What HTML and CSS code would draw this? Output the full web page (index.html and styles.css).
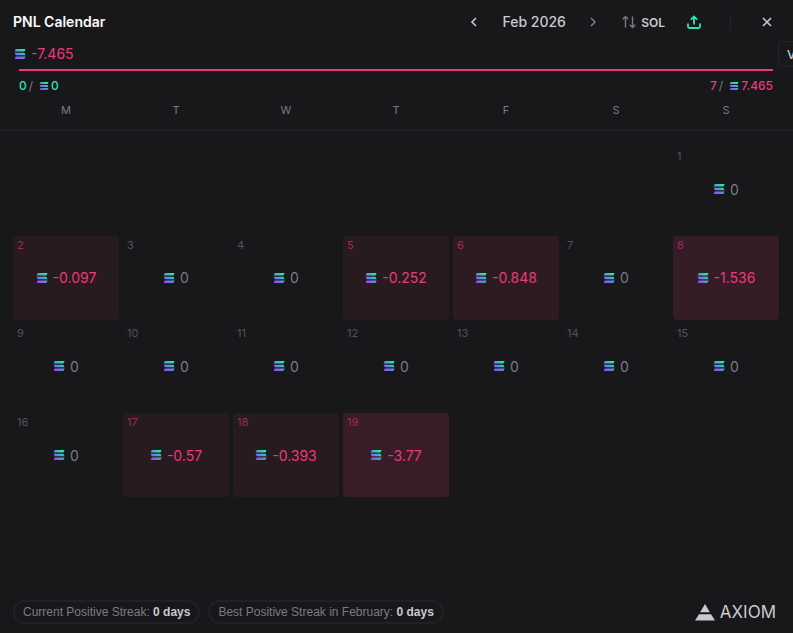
FILE: index.html
```html
<!DOCTYPE html>
<html lang="en">
<head>
	<meta charset="UTF-8">
	<meta name="viewport" content="width=device-width, initial-scale=1.0">
	<title>PNL Calendar</title>
	<link rel="stylesheet" href="styles.css">
</head>
<body>
	<svg class="defs" width="0" height="0" aria-hidden="true">
		<defs>
			<linearGradient id="solGradient" gradientUnits="userSpaceOnUse" x1="2" y1="10" x2="10" y2="0">
				<stop offset="0" stop-color="#9945ff"/>
				<stop offset="0.5" stop-color="#5497d5"/>
				<stop offset="1" stop-color="#19fb9b"/>
			</linearGradient>
			<symbol id="sol" viewBox="0 0 12 10">
				<path fill="url(#solGradient)" d="M1.8 0H11.6L10.4 2.5H0.6ZM0.6 3.8H10.4L11.6 6.3H1.8ZM1.8 7.5H11.6L10.4 10H0.6Z"/>
			</symbol>
		</defs>
	</svg>
	<div class="panel">
		<header class="header">
			<h1>PNL Calendar</h1>
			<div class="controls">
				<button class="prev" aria-label="Previous month">
					<svg width="8" height="10" viewBox="0 0 8 10"><path d="M6 1L2 5L6 9"/></svg>
				</button>
				<span class="month">Feb 2026</span>
				<button class="next" aria-label="Next month">
					<svg width="8" height="10" viewBox="0 0 8 10"><path d="M2 1L6 5L2 9"/></svg>
				</button>
				<button class="currency">
					<svg width="14" height="14" viewBox="0 0 14 14"><path d="M3.5 12.5V1.5M0.8 4.2L3.5 1.5L6.2 4.2M10.5 1.5V12.5M7.8 9.8L10.5 12.5L13.2 9.8"/></svg>
					SOL
				</button>
				<button class="share" aria-label="Share">
					<svg width="14" height="14" viewBox="0 0 14 14"><path d="M7 9.5V1.5M3.8 4.7L7 1.5L10.2 4.7M1 8.5V11.5Q1 13 2.5 13H11.5Q13 13 13 11.5V8.5"/></svg>
				</button>
				<span class="divider"></span>
				<button class="close" aria-label="Close">
					<svg width="10" height="10" viewBox="0 0 10 10"><path d="M1 1L9 9M9 1L1 9"/></svg>
				</button>
			</div>
		</header>

		<section class="summary">
			<p class="total"><svg class="sol"><use href="#sol"/></svg>-7.465</p>
			<div class="bar"></div>
			<div class="split">
				<p class="win">0<span>/</span><svg class="sol small"><use href="#sol"/></svg>0</p>
				<p class="loss">7<span>/</span><svg class="sol small"><use href="#sol"/></svg>7.465</p>
			</div>
			<button class="view">View</button>
		</section>

		<table class="calendar">
			<thead>
				<tr><th>M</th><th>T</th><th>W</th><th>T</th><th>F</th><th>S</th><th>S</th></tr>
			</thead>
			<tbody id="days"></tbody>
		</table>

		<footer class="footer">
			<p class="streak">Current Positive Streak: <b>0 days</b></p>
			<p class="streak">Best Positive Streak in February: <b>0 days</b></p>
			<div class="brand">
				<svg width="20" height="17" viewBox="0 0 20 17"><path d="M10 0L14.9 8.2H5.1ZM4 10.2H16L20 16.5H0Z"/></svg>
				AXIOM
			</div>
		</footer>
	</div>
	<script>
		const pnl = { 2: -0.097, 5: -0.252, 6: -0.848, 8: -1.536, 17: -0.57, 18: -0.393, 19: -3.77 };
		const firstColumn = 6;
		const lastDay = 19;
		const days = document.getElementById('days');

		function lossLevel(value) {
			if (value > -0.8) return 'low';
			if (value > -1) return 'medium';
			if (value > -3) return 'high';
			return 'max';
		}

		for (let week = 0; week < 5; week++) {
			const row = document.createElement('tr');
			for (let column = 0; column < 7; column++) {
				const cell = document.createElement('td');
				const day = week * 7 + column - firstColumn + 1;
				if (day >= 1 && day <= lastDay) {
					const value = pnl[day] || 0;
					if (value < 0) {
						cell.className = 'negative ' + lossLevel(value);
					}
					cell.innerHTML = '<span class="day">' + day + '</span>' +
						'<span class="value"><svg class="sol"><use href="#sol"/></svg>' + value + '</span>';
				}
				row.appendChild(cell);
			}
			days.appendChild(row);
		}
	</script>
</body>
</html>
```
FILE: styles.css
```css
* {
	box-sizing: border-box;
}
body {
	margin: 0;
	background: #18181a;
	color: #c8c9d1;
	font-family: Inter, "Liberation Sans", sans-serif;
	font-size: 14px;
	overflow-x: hidden;
}
h1, p {
	margin: 0;
}
button {
	display: flex;
	align-items: center;
	padding: 0;
	border: 0;
	background: none;
	color: inherit;
	font: inherit;
	cursor: pointer;
}
button svg {
	fill: none;
	stroke: currentColor;
	stroke-width: 1.6;
}
.defs {
	position: absolute;
}
.panel {
	display: flex;
	flex-direction: column;
	min-height: 100vh;
}

/* header */
.header {
	display: flex;
	align-items: center;
	justify-content: space-between;
	height: 44px;
	padding: 0 21px 0 13px;
}
.header h1 {
	color: #fcfcfc;
	font-size: 14px;
	font-weight: 600;
	line-height: 20px;
}
.controls {
	display: flex;
	align-items: center;
}
.month {
	width: 110px;
	font-weight: 500;
	line-height: 20px;
	text-align: center;
}
.prev {
	margin-right: 1px;
}
.next {
	margin-right: 25px;
	color: #777a8c;
}
.currency {
	gap: 5px;
	margin-right: 22px;
	font-size: 12px;
	font-weight: 600;
}
.currency svg {
	color: #777a8c;
	stroke-width: 1.4;
}
.share {
	margin-right: 29px;
	color: #2fe3ac;
}
.share svg {
	stroke-width: 1.8;
}
.divider {
	width: 1px;
	height: 16px;
	margin-right: 31px;
	background: #22242d;
}

/* totals */
.summary {
	position: relative;
	padding: 0 20px 0 19px;
}
.sol {
	width: 12px;
	height: 10px;
	flex: none;
}
.sol.small {
	width: 10px;
	height: 8px;
}
.total {
	display: flex;
	align-items: center;
	gap: 5px;
	margin-left: -5px;
	color: #ec397a;
	line-height: 20px;
}
.bar {
	height: 2px;
	margin-top: 5px;
	background: #ec397a;
}
.split {
	display: flex;
	justify-content: space-between;
	margin-top: 7px;
	font-size: 12px;
	font-weight: 500;
	line-height: 16px;
}
.split p {
	display: flex;
	align-items: center;
	gap: 2px;
}
.split span {
	margin-right: 4px;
	color: #777a8c;
	font-weight: 400;
}
.win {
	color: #2fe3ac;
}
.loss {
	color: #ec397a;
}
.view {
	position: absolute;
	top: -3px;
	left: calc(100% - 15px);
	height: 26px;
	padding: 0 8px;
	border: 1px solid #22242d;
	border-radius: 4px;
	font-size: 12px;
	font-weight: 500;
}

/* calendar */
.calendar, .calendar tbody {
	display: flex;
	flex: 1;
	flex-direction: column;
}
.calendar thead {
	display: block;
	padding: 8px 14px 12px 13px;
	border-bottom: 1px solid #22242d;
}
.calendar tbody {
	gap: 4px;
	padding: 16px 14px 22px 13px;
}
.calendar tr {
	display: grid;
	grid-template-columns: repeat(7, 1fr);
	gap: 4px;
}
.calendar tbody tr {
	flex: 1;
}
.calendar th {
	padding: 0;
	color: #777a8c;
	font-size: 11px;
	font-weight: 400;
	line-height: 16px;
}
.calendar td {
	display: grid;
	grid-template-rows: 18px 1fr 18px;
	padding: 0 4px;
	border-radius: 4px;
}
.day {
	color: #50525f;
	font-size: 11px;
	line-height: 18px;
}
.value {
	display: flex;
	align-items: center;
	justify-content: center;
	gap: 5px;
	color: #777a8c;
}
.negative .value {
	color: #ec397a;
}
.negative .day {
	color: #9c2c56;
}
.low {
	background: #271b20;
}
.medium {
	background: #2c1c22;
}
.high {
	background: #341d26;
}
.max {
	background: #381d28;
}

/* footer */
.footer {
	display: flex;
	align-items: center;
	gap: 8px;
	padding: 9px 17px 9px 13px;
}
.streak {
	padding: 3px 8px;
	border: 2px solid #202128;
	border-radius: 12px;
	color: #777a8c;
	font-family: "Liberation Sans", sans-serif;
	font-size: 12px;
	line-height: 14px;
}
.streak b {
	color: #c8c9d1;
	font-weight: 600;
}
.brand {
	display: flex;
	align-items: center;
	gap: 5px;
	margin-left: auto;
	font-size: 17px;
	line-height: 20px;
}
.brand svg {
	fill: currentColor;
}
```
